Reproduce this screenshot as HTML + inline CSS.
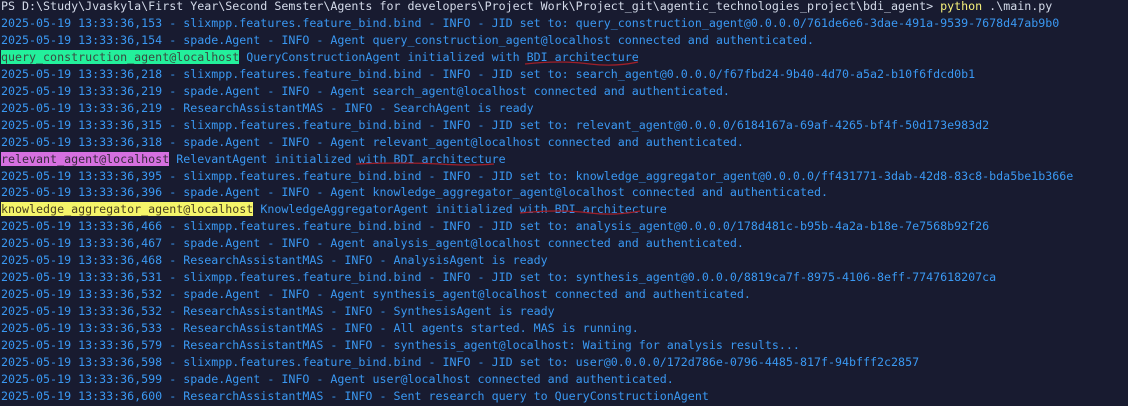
<!DOCTYPE html>
<html><head><meta charset="utf-8"><style>
html,body{margin:0;padding:0;width:1128px;height:406px;overflow:hidden;background:#181b30;}
pre{position:absolute;left:1px;top:-2px;margin:0;font-family:"DejaVu Sans Mono","Liberation Mono",monospace;font-size:11.65px;line-height:16.96px;color:#3a98f2;white-space:pre;}
.w{color:#d4dbea}.y{color:#f5f07a}
.g{background:#23f09b;color:#3a4a40}
.p{background:#d670e0;color:#3a2a40}
.k{background:#f5f56a;color:#4a4020}
svg{position:absolute;left:0;top:0}
</style></head><body>
<pre><span class="w">PS D:\Study\Jvaskyla\First Year\Second Semster\Agents for developers\Project Work\Project_git\agentic_technologies_project\bdi_agent&gt; </span><span class="y">python</span><span class="w"> .\main.py</span>
2025-05-19 13:33:36,153 - slixmpp.features.feature_bind.bind - INFO - JID set to: query_construction_agent@0.0.0.0/761de6e6-3dae-491a-9539-7678d47ab9b0
2025-05-19 13:33:36,154 - spade.Agent - INFO - Agent query_construction_agent@localhost connected and authenticated.
<span class="g">query_construction_agent@localhost</span> QueryConstructionAgent initialized with BDI architecture
2025-05-19 13:33:36,218 - slixmpp.features.feature_bind.bind - INFO - JID set to: search_agent@0.0.0.0/f67fbd24-9b40-4d70-a5a2-b10f6fdcd0b1
2025-05-19 13:33:36,219 - spade.Agent - INFO - Agent search_agent@localhost connected and authenticated.
2025-05-19 13:33:36,219 - ResearchAssistantMAS - INFO - SearchAgent is ready
2025-05-19 13:33:36,315 - slixmpp.features.feature_bind.bind - INFO - JID set to: relevant_agent@0.0.0.0/6184167a-69af-4265-bf4f-50d173e983d2
2025-05-19 13:33:36,318 - spade.Agent - INFO - Agent relevant_agent@localhost connected and authenticated.
<span class="p">relevant_agent@localhost</span> RelevantAgent initialized with BDI architecture
2025-05-19 13:33:36,395 - slixmpp.features.feature_bind.bind - INFO - JID set to: knowledge_aggregator_agent@0.0.0.0/ff431771-3dab-42d8-83c8-bda5be1b366e
2025-05-19 13:33:36,396 - spade.Agent - INFO - Agent knowledge_aggregator_agent@localhost connected and authenticated.
<span class="k">knowledge_aggregator_agent@localhost</span> KnowledgeAggregatorAgent initialized with BDI architecture
2025-05-19 13:33:36,466 - slixmpp.features.feature_bind.bind - INFO - JID set to: analysis_agent@0.0.0.0/178d481c-b95b-4a2a-b18e-7e7568b92f26
2025-05-19 13:33:36,467 - spade.Agent - INFO - Agent analysis_agent@localhost connected and authenticated.
2025-05-19 13:33:36,468 - ResearchAssistantMAS - INFO - AnalysisAgent is ready
2025-05-19 13:33:36,531 - slixmpp.features.feature_bind.bind - INFO - JID set to: synthesis_agent@0.0.0.0/8819ca7f-8975-4106-8eff-7747618207ca
2025-05-19 13:33:36,532 - spade.Agent - INFO - Agent synthesis_agent@localhost connected and authenticated.
2025-05-19 13:33:36,532 - ResearchAssistantMAS - INFO - SynthesisAgent is ready
2025-05-19 13:33:36,533 - ResearchAssistantMAS - INFO - All agents started. MAS is running.
2025-05-19 13:33:36,579 - ResearchAssistantMAS - INFO - synthesis_agent@localhost: Waiting for analysis results...
2025-05-19 13:33:36,598 - slixmpp.features.feature_bind.bind - INFO - JID set to: user@0.0.0.0/172d786e-0796-4485-817f-94bfff2c2857
2025-05-19 13:33:36,599 - spade.Agent - INFO - Agent user@localhost connected and authenticated.
2025-05-19 13:33:36,600 - ResearchAssistantMAS - INFO - Sent research query to QueryConstructionAgent</pre>
<svg width="1128" height="406"><g fill="none" stroke="#a0202a" stroke-width="1.3">
<path d="M525 64 Q560 60 590 64 Q615 67 638 62"/>
<path d="M520 213 Q560 209 590 213 Q615 216 640 211"/>
<path d="M356 164 Q400 162 440 164 Q470 166 494 164"/>
</g></svg>
</body></html>
